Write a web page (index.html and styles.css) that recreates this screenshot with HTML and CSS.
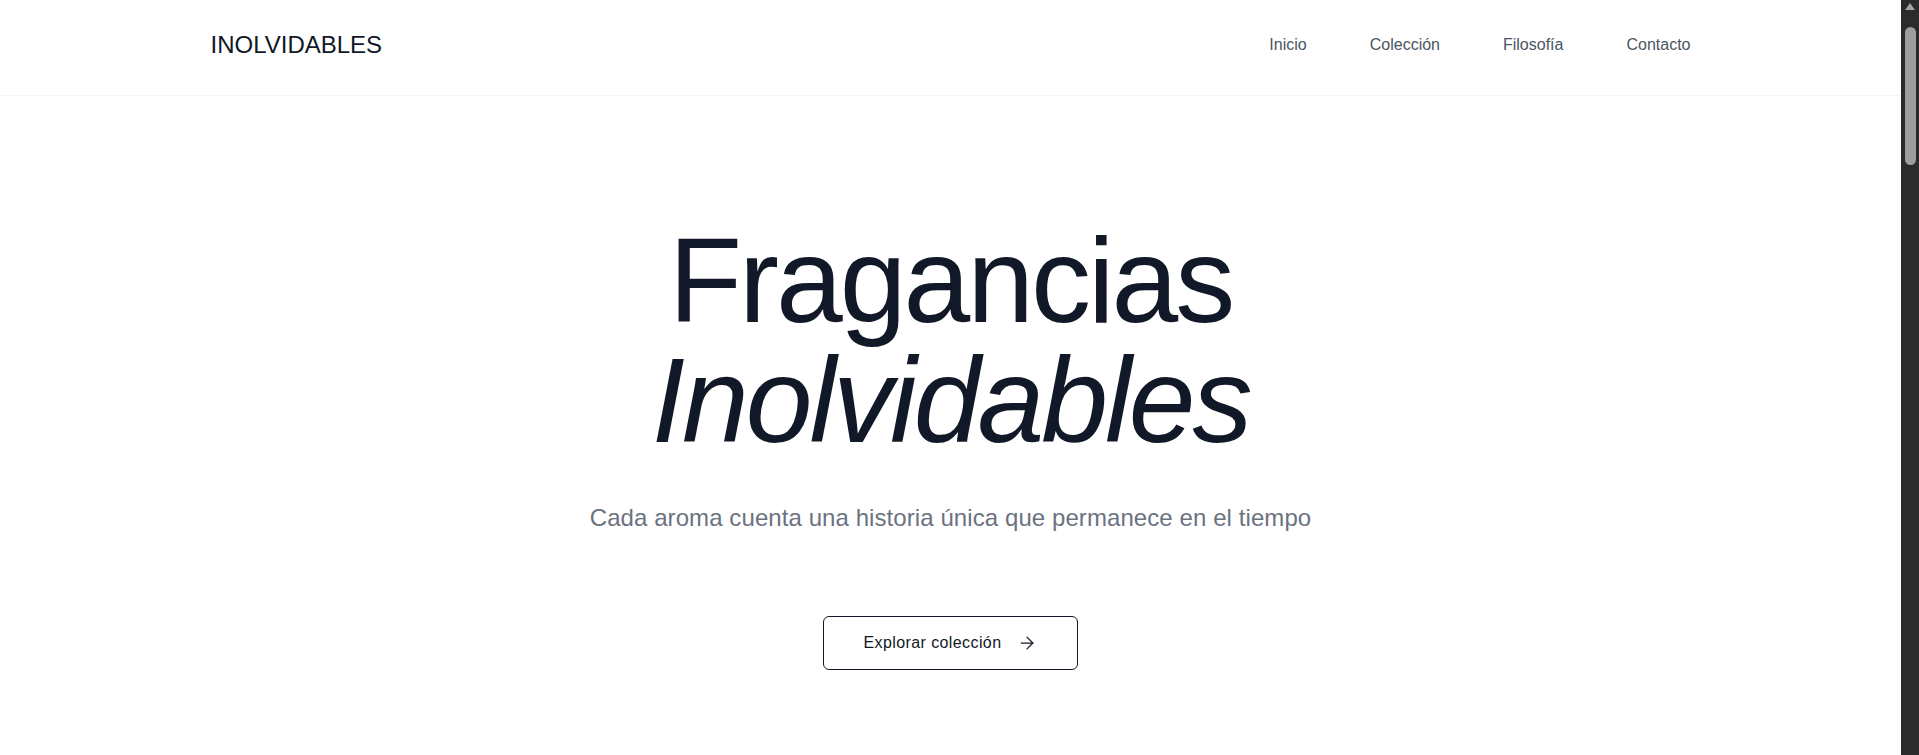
FILE: index.html
```html
<!DOCTYPE html>
<html lang="es">
<head>
<meta charset="utf-8">
<title>Inolvidables — Fragancias</title>
<link rel="stylesheet" href="styles.css">
</head>
<body>
<header class="site-header">
  <div class="container header-inner">
    <a class="logo" href="#inicio">INOLVIDABLES</a>
    <nav class="nav">
      <a href="#inicio">Inicio</a>
      <a href="#coleccion">Colección</a>
      <a href="#filosofia">Filosofía</a>
      <a href="#contacto">Contacto</a>
    </nav>
  </div>
</header>
<main>
  <section class="hero" id="inicio">
    <h1 class="hero-title">Fragancias<em>Inolvidables</em></h1>
    <p class="hero-sub">Cada aroma cuenta una historia única que permanece en el tiempo</p>
    <a class="btn" href="#coleccion">Explorar colección
      <svg class="btn-icon" viewBox="0 0 24 24" width="20" height="20" fill="none" stroke="currentColor" stroke-width="1.5" stroke-linecap="round" stroke-linejoin="round"><path d="M5 12h14"/><path d="m12 5 7 7-7 7"/></svg>
    </a>
  </section>

  <section class="section collection" id="coleccion">
    <div class="container">
      <h2 class="section-title">Colección</h2>
      <div class="grid">
        <article class="card"><div class="card-img"></div><h3>Ámbar Nocturno</h3><p>Notas de ámbar, vainilla y sándalo.</p></article>
        <article class="card"><div class="card-img"></div><h3>Brisa de Azahar</h3><p>Flor de naranjo, bergamota y almizcle.</p></article>
        <article class="card"><div class="card-img"></div><h3>Cedro Eterno</h3><p>Cedro, vetiver y pimienta rosa.</p></article>
      </div>
    </div>
  </section>

  <section class="section philosophy" id="filosofia">
    <div class="container narrow">
      <h2 class="section-title">Filosofía</h2>
      <p class="section-text">Creemos que un perfume es un recuerdo que se lleva en la piel.</p>
    </div>
  </section>

  <section class="section contact" id="contacto">
    <div class="container narrow">
      <h2 class="section-title">Contacto</h2>
      <p class="section-text">hola@inolvidables.com</p>
    </div>
  </section>
</main>
<div class="scrollbar" aria-hidden="true">
  <span class="scrollbar-arrow"></span>
  <span class="scrollbar-thumb"></span>
</div>
</body>
</html>
```

FILE: styles.css
```css
* { box-sizing: border-box; }

html, body {
  margin: 0;
  padding: 0;
}

body {
  font-family: "Liberation Sans", Arial, sans-serif;
  background: #ffffff;
  color: #111827;
  padding-right: 18px;
}

/* emulated browser scrollbar overlay */
.scrollbar {
  position: fixed;
  top: 0;
  right: 0;
  width: 18px;
  height: 100vh;
  background: #2b2b2b;
  z-index: 10;
}

.scrollbar-arrow {
  position: absolute;
  top: 3px;
  left: 4px;
  width: 0;
  height: 0;
  border-left: 5px solid transparent;
  border-right: 5px solid transparent;
  border-bottom: 7px solid #a3a3a3;
}

.scrollbar-thumb {
  position: absolute;
  top: 27px;
  left: 4px;
  width: 11px;
  height: 138px;
  border-radius: 6px;
  background: #9e9e9e;
}

.container {
  max-width: 1480px;
  margin: 0 auto;
}

.site-header {
  border-bottom: 1px solid #f3f4f6;
}

.header-inner {
  display: flex;
  justify-content: space-between;
  align-items: center;
  padding: 29px 0 34px;
}

.logo {
  font-size: 24px;
  line-height: 32px;
  color: #111827;
  text-decoration: none;
}

.nav {
  display: flex;
  gap: 63px;
}

.nav a {
  font-size: 16px;
  line-height: 24px;
  color: #4b5563;
  text-decoration: none;
}

.hero {
  text-align: center;
  padding: 124px 0 140px;
}

.hero-title {
  margin: 0 0 42px;
  font-size: 120px;
  line-height: 1;
  font-weight: 400;
  letter-spacing: -0.025em;
  color: #111827;
}

.hero-title em {
  display: block;
  font-style: italic;
}

.hero-sub {
  margin: 0 0 82px;
  font-size: 24px;
  line-height: 32px;
  letter-spacing: 0.08px;
  color: #6b7280;
}

.btn {
  display: inline-flex;
  align-items: center;
  gap: 16px;
  padding: 14px 40px;
  border: 1px solid #111827;
  border-radius: 6px;
  font-size: 16px;
  line-height: 24px;
  letter-spacing: 0.025em;
  color: #111827;
  text-decoration: none;
  background: #ffffff;
}

.btn-icon {
  display: block;
}

.section {
  padding: 128px 0;
}

.section-title {
  margin: 0 0 64px;
  font-size: 48px;
  font-weight: 400;
  text-align: center;
  color: #111827;
}

.section-text {
  margin: 0;
  font-size: 20px;
  line-height: 32px;
  text-align: center;
  color: #6b7280;
}

.narrow {
  max-width: 768px;
}

.grid {
  display: grid;
  grid-template-columns: repeat(3, 1fr);
  gap: 48px;
}

.card h3 {
  margin: 24px 0 8px;
  font-size: 20px;
  font-weight: 400;
}

.card p {
  margin: 0;
  color: #6b7280;
}

.card-img {
  height: 600px;
  background: #f9fafb;
}

.collection { min-height: 1300px; }
.philosophy { min-height: 900px; }
.contact { min-height: 950px; }
```
